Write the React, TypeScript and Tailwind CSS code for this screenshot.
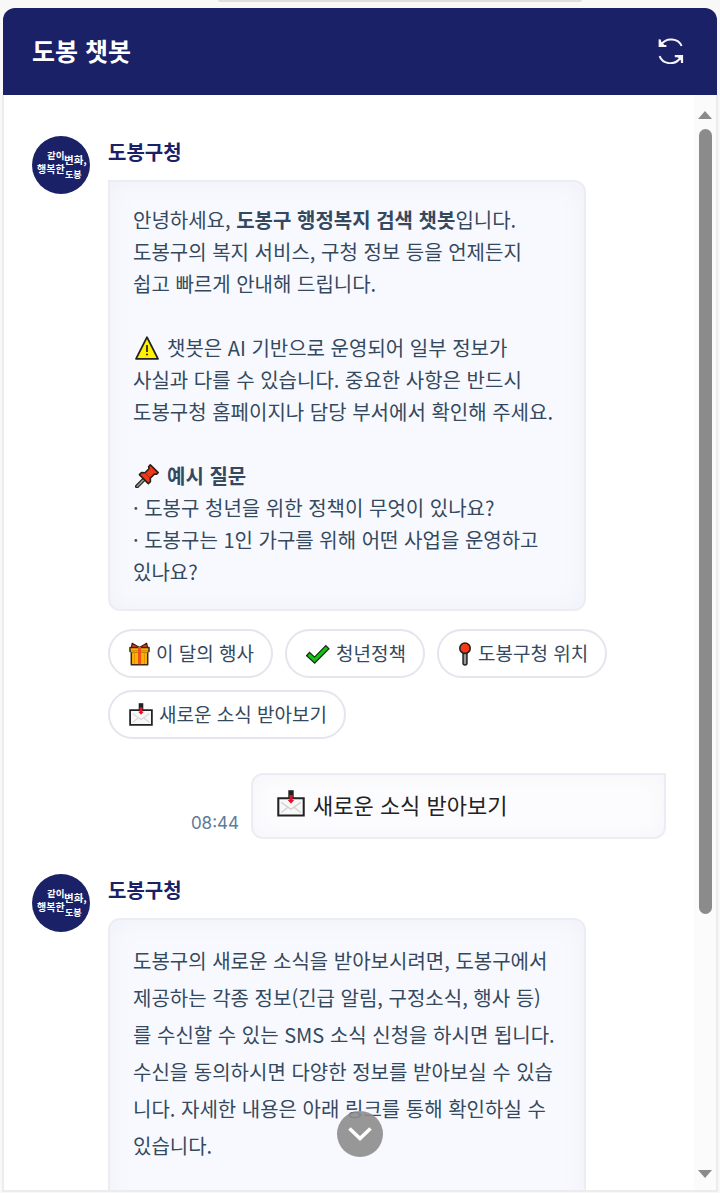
import type { ReactNode } from 'react';

function RefreshIcon() {
  return (
    <svg viewBox="0 0 26 26" className="size-[26px]" fill="none" stroke="#f4f4fa" strokeWidth="2" aria-hidden="true">
      <path d="M23.6 8C20.5.2 8.4-1.2 3 6.6" />
      <path d="M1.8 1.6V8H8.4" strokeWidth="2.2" />
      <path d="M1.9 3.6V8H6Z" fill="#f4f4fa" />
      <path d="M1.6 18.2C4.6 26.4 17 28 22.6 19.6" />
      <path d="M16.8 18.2H24V25" strokeWidth="2.2" />
      <path d="M20 18.3H24V22.2Z" fill="#f4f4fa" />
    </svg>
  );
}

function WarningIcon() {
  return (
    <svg viewBox="0 0 24 24" className="h-6 w-6 shrink-0" aria-hidden="true">
      <path d="M12 1.2 23 22.8H1Z" fill="#fff100" stroke="#222" strokeWidth="1.8" strokeLinejoin="round" />
      <path d="M12 9V16" stroke="#222" strokeWidth="1.7" />
      <circle cx="12" cy="18.6" r="1" fill="#222" />
    </svg>
  );
}

function PushpinIcon() {
  return (
    <svg viewBox="0 0 24 24" className="h-6 w-6 shrink-0" aria-hidden="true">
      <path d="M2 22.4 9.2 15.2" stroke="#222" strokeWidth="4" strokeLinecap="round" />
      <path d="M2.2 22.2 9 15.4" stroke="#999" strokeWidth="1.6" strokeLinecap="round" />
      <path
        d="M15.3.9 23.2 8.6 21.3 10.3 19.3 10.1 15.3 14.2 15.4 17.6 13.3 19.6 4.4 10.6 6.5 8.5 10 8.8 14 4.8 13.6 2.7Z"
        fill="#f03a17"
        stroke="#222"
        strokeWidth="1.6"
        strokeLinejoin="round"
      />
      <path d="M10 8.8 15.3 14.2" stroke="#a82510" strokeWidth="1" />
    </svg>
  );
}

function GiftIcon() {
  return (
    <svg viewBox="0 0 21 24" className="h-6 w-[21px] shrink-0" aria-hidden="true">
      <path d="M10.5 5.5 3.2 1.2 2.4 5.6M10.5 5.5 17.6 1.2 18.6 5.6" fill="#f03a17" stroke="#4a1a10" strokeWidth="1.2" strokeLinejoin="round" />
      <path d="M2.3 9.5H18.7V22.8H2.3Z" fill="#ffb000" stroke="#3a2a10" strokeWidth="1.5" strokeLinejoin="round" />
      <path d="M1 5.5H20V9.5H1Z" fill="#ffb000" stroke="#3a2a10" strokeWidth="1.5" strokeLinejoin="round" />
      <path d="M1.8 9.5H19.2" stroke="#f0a000" strokeWidth="1.6" />
      <path d="M10.5 5V22.2" stroke="#f0501c" strokeWidth="3" />
      <path d="M5.5 11V22M15.5 11V22" stroke="#e39500" strokeWidth="1" />
    </svg>
  );
}

function CheckIcon() {
  return (
    <svg viewBox="0 0 24 24" className="h-6 w-6 shrink-0" fill="none" aria-hidden="true">
      <path d="M1.6 11.6 8.6 18.2 21.8 4.8" stroke="#1d2a1d" strokeWidth="5.6" />
      <path d="M2.6 12.5 8.6 18.1 20.9 5.7" stroke="#10c410" strokeWidth="3.2" />
    </svg>
  );
}

function RoundPinIcon() {
  return (
    <svg viewBox="0 0 14 24" className="h-6 w-3.5 shrink-0" aria-hidden="true">
      <path d="M7 10V21" stroke="#222" strokeWidth="5.4" strokeLinecap="round" />
      <path d="M7 12V21" stroke="#999" strokeWidth="2.4" strokeLinecap="round" />
      <circle cx="7" cy="6.2" r="5.2" fill="#f93a12" stroke="#222" strokeWidth="1.6" />
    </svg>
  );
}

function MailIcon({ className }: { className: string }) {
  return (
    <svg viewBox="0 0 26 26" className={className} aria-hidden="true">
      <path d="M1.2 7.6H24.8V23.6H1.2Z" fill="#f7f7f7" stroke="#222" strokeWidth="1.9" />
      <path d="M4 21 10.4 15.8M22 21 15.6 15.8M4 11.5 13 18 22 11.5" fill="none" stroke="#d2d2d2" strokeWidth="1.2" />
      <path d="M13 .2V8" stroke="#222" strokeWidth="5" />
      <path d="M13 4.6V10.4" stroke="#e8112d" strokeWidth="3" />
      <path d="M10 9.4H16L13 12.8Z" fill="#e8112d" />
    </svg>
  );
}

function Avatar() {
  return (
    <svg
      viewBox="0 0 58 58"
      className="mt-[5px] size-[58px] shrink-0 font-['Noto_Sans_CJK_KR',sans-serif] font-bold"
      fill="#fff"
      role="img"
      aria-label="같이 변화, 행복한 도봉"
    >
      <circle cx="29" cy="29" r="29" fill="#1b2167" />
      <text x="15" y="23" fontSize="9.5">같이</text>
      <text x="32" y="28" fontSize="10.5">변화,</text>
      <text x="5" y="37" fontSize="10">행복한</text>
      <text x="33" y="42" fontSize="9">도봉</text>
    </svg>
  );
}

function BotMessage({ bubble, children, footer }: { bubble: string; children: ReactNode; footer?: ReactNode }) {
  return (
    <article className="flex items-start gap-[18px]">
      <Avatar />
      <div className="min-w-0 flex-1 pt-[5px]">
        <h2 className="text-[20px] leading-8 font-bold text-[#1b2167]">도봉구청</h2>
        <div
          className={`mt-3 w-[478px] max-w-full border-2 border-[#ececf3] bg-[#f8f9fe] px-[23px] whitespace-nowrap text-[#34495e] shadow-[inset_0_0_24px_#eff0f8] ${bubble}`}
        >
          {children}
        </div>
        {footer}
      </div>
    </article>
  );
}

const quickReplies = [
  { label: '이 달의 행사', icon: <GiftIcon /> },
  { label: '청년정책', icon: <CheckIcon /> },
  { label: '도봉구청 위치', icon: <RoundPinIcon /> },
  { label: '새로운 소식 받아보기', icon: <MailIcon className="size-6 shrink-0" /> },
];

const answer = [
  '도봉구의 새로운 소식을 받아보시려면, 도봉구에서',
  '제공하는 각종 정보(긴급 알림, 구정소식, 행사 등)',
  '를 수신할 수 있는 SMS 소식 신청을 하시면 됩니다.',
  '수신을 동의하시면 다양한 정보를 받아보실 수 있습',
  '니다. 자세한 내용은 아래 링크를 통해 확인하실 수',
  '있습니다.',
];

export default function App() {
  return (
    <div
      lang="ko"
      className="flex h-screen flex-col overflow-hidden bg-[#f8f8f8] px-0.5 pb-px font-['Noto_Sans_CJK_KR',sans-serif]"
    >
      <div className="flex h-2 shrink-0 items-start justify-center pl-20">
        <div className="h-0.5 w-[364px] rounded-b-full bg-[#dedede]" />
      </div>
      <header className="mx-px flex h-[87px] shrink-0 items-center justify-between rounded-t-xl bg-[#1b2167] pr-[33px] pb-0.5 pl-[29px]">
        <h1 className="text-[25px] font-bold text-white">도봉 챗봇</h1>
        <button type="button" aria-label="새로고침">
          <RefreshIcon />
        </button>
      </header>

      <div className="relative flex min-h-0 flex-1 border-x-2 border-b-2 border-[#ececee] bg-white">
        <main className="min-w-0 flex-1 overflow-hidden px-7 pt-9">
          <BotMessage
            bubble="rounded-xl rounded-tl-none h-[431px] py-[22px] text-[20px] leading-8"
            footer={
              <div className="mt-[18px] flex flex-wrap gap-3">
                {quickReplies.map(({ label, icon }) => (
                  <button
                    key={label}
                    type="button"
                    className="flex h-[49px] items-center gap-1.5 rounded-full border-2 border-[#e5e5ee] bg-white pr-[17px] pl-[19px] text-[19px] text-[#34495e]"
                  >
                    {icon}
                    <span>{label}</span>
                  </button>
                ))}
              </div>
            }
          >
            <p>
              <span className="block">
                안녕하세요, <strong>도봉구 행정복지 검색 챗봇</strong>입니다.
              </span>
              <span className="block">도봉구의 복지 서비스, 구청 정보 등을 언제든지</span>
              <span className="block">쉽고 빠르게 안내해 드립니다.</span>
            </p>
            <p className="mt-8">
              <span className="flex items-center gap-2 pl-0.5">
                <WarningIcon />
                챗봇은 AI 기반으로 운영되어 일부 정보가
              </span>
              <span className="block">사실과 다를 수 있습니다. 중요한 사항은 반드시</span>
              <span className="block">도봉구청 홈페이지나 담당 부서에서 확인해 주세요.</span>
            </p>
            <h3 className="mt-8 flex items-center gap-2 pl-0.5 font-bold">
              <PushpinIcon />
              예시 질문
            </h3>
            <p>
              <span className="block">· 도봉구 청년을 위한 정책이 무엇이 있나요?</span>
              <span className="block">· 도봉구는 1인 가구를 위해 어떤 사업을 운영하고</span>
              <span className="block">있나요?</span>
            </p>
          </BotMessage>

          <div className="mt-[34px] flex items-end justify-end gap-3">
            <time className="mb-1.5 font-['Inter',sans-serif] text-[17px] leading-5 text-[#5c7b98]">08:44</time>
            <div className="flex h-[66px] w-[415px] items-center gap-2 rounded-xl rounded-tr-none border-2 border-[#ececf2] bg-[#fcfcfe] px-6 pb-1 text-[22px] text-[#222] shadow-[inset_0_0_20px_#f4f5fa]">
              <MailIcon className="size-7 shrink-0" />
              <span>새로운 소식 받아보기</span>
            </div>
          </div>

          <div className="mt-[30px]">
            <BotMessage bubble="rounded-xl h-[431px] py-[22px] text-[20px] leading-[37px]">
              <p>
                {answer.map((line) => (
                  <span key={line} className="block">
                    {line}
                  </span>
                ))}
              </p>
            </BotMessage>
          </div>
        </main>

        <div className="flex w-[22px] shrink-0 flex-col items-center bg-[#fbfbfb] pt-4 pb-3" aria-hidden="true">
          <svg viewBox="0 0 14 8" className="h-2 w-3.5" fill="#8b8b8b">
            <path d="M7 0 14 8H0Z" />
          </svg>
          <div className="mt-2.5 h-[785px] w-[13px] rounded-full bg-[#8b8b8b]" />
          <svg viewBox="0 0 14 8" className="mt-auto h-2 w-3.5" fill="#8b8b8b">
            <path d="M0 0H14L7 8Z" />
          </svg>
        </div>

        <button
          type="button"
          aria-label="맨 아래로"
          className="absolute bottom-[33px] left-1/2 flex size-[46px] -translate-x-1/2 items-center justify-center rounded-full bg-[#8c8c8c]/90"
        >
          <svg viewBox="0 0 24 16" className="h-4 w-6" fill="none" stroke="#fff" strokeWidth="3.6" aria-hidden="true">
            <path d="M1.5 2.5 12 12.5 22.5 2.5" />
          </svg>
        </button>
      </div>
    </div>
  );
}
